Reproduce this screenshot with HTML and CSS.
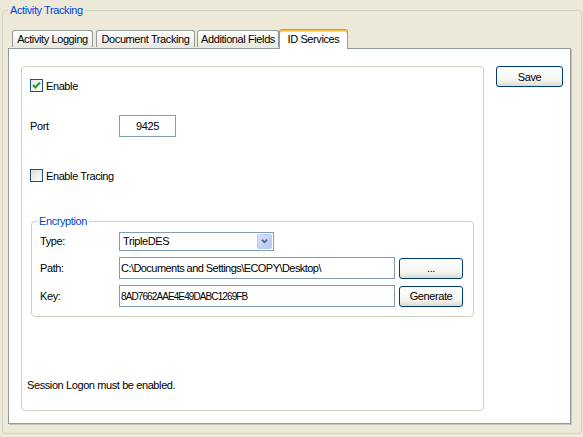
FILE: index.html
```html
<!DOCTYPE html>
<html lang="en">
<head>
  <meta charset="UTF-8">
  <title>Activity Tracking</title>
  <link rel="stylesheet" href="styles.css">
</head>
<body>

<fieldset class="group outer">
  <legend>Activity Tracking</legend>

  <div class="tabs">
    <div class="tab t1">Activity Logging</div>
    <div class="tab t2">Document Tracking</div>
    <div class="tab t3">Additional Fields</div>
    <div class="tab t4 active">ID Services</div>
  </div>

  <div class="panel">
    <div class="box">
      <label class="check first"><span class="cb on"><svg width="11" height="11" viewBox="0 0 11 11"><polyline points="2,5 4.3,7.5 9,2.5" fill="none" stroke="#21a121" stroke-width="2"/></svg></span>Enable</label>

      <div class="row port">
        <span class="lbl">Port</span>
        <input type="text" class="field num" value="9425">
      </div>

      <label class="check tracing"><span class="cb"></span>Enable Tracing</label>

      <fieldset class="group enc">
        <legend>Encryption</legend>
        <div class="erow r-type">
          <span class="elbl">Type:</span>
          <div class="combo">
            <span class="combo-text">TripleDES</span>
            <span class="combo-btn"><svg width="15" height="16" viewBox="0 0 15 16"><polyline points="4.5,6.5 7.5,9.5 10.5,6.5" fill="none" stroke="#4d6185" stroke-width="2"/></svg></span>
          </div>
        </div>
        <div class="erow">
          <span class="elbl">Path:</span>
          <input type="text" class="field long path" value="C:\Documents and Settings\ECOPY\Desktop\">
          <button class="btn small">...</button>
        </div>
        <div class="erow">
          <span class="elbl">Key:</span>
          <input type="text" class="field long key" value="8AD7662AAE4E49DABC1269FB">
          <button class="btn small">Generate</button>
        </div>
      </fieldset>

      <p class="note">Session Logon must be enabled.</p>
    </div>

    <div class="side">
      <button class="btn save">Save</button>
    </div>
  </div>
</fieldset>

</body>
</html>
```

FILE: styles.css
```css
body {
  margin: 0;
  width: 583px;
  height: 437px;
  overflow: hidden;
  background: #ece9d8;
  font-family: 'Liberation Sans', Arial, sans-serif;
  font-size: 11px;
  letter-spacing: -0.4px;
  color: #000;
}

.group {
  border: 1px solid #d0d0bf;
  border-radius: 4px;
  min-width: 0;
}

.group legend {
  padding: 0 2px;
  line-height: 14px;
  color: #0046d5;
}

.outer {
  margin: 3px 1px 0 2px;
  padding: 12px 0 9px 5px;
  width: 580px;
  box-sizing: border-box;
}

/* tabs */
.tabs {
  display: flex;
  align-items: flex-end;
  height: 19px;
  padding-left: 4px;
  position: relative;
  z-index: 1;
}

.tab {
  box-sizing: border-box;
  height: 17px;
  margin-bottom: 1px;
  border: 1px solid #919b9c;
  border-bottom: none;
  border-radius: 3px 3px 0 0;
  background: linear-gradient(#ffffff, #f3f3ef 60%, #e7e6df);
  text-align: center;
  line-height: 16px;
  white-space: nowrap;
}

.t1 { width: 81px; }
.t2 { width: 99px; margin-left: 3px; }
.t3 { width: 82px; margin-left: 2px; }

.tab.active {
  width: 69px;
  height: 20px;
  margin-bottom: -1px;
  border-top: 1px solid #e68b2c;
  background: #fff;
  box-shadow: inset 0 1px 0 #ffc83c, inset 0 2px 0 #ffd76a;
  line-height: 18px;
}

/* panel */
.panel {
  display: flex;
  align-items: flex-start;
  box-sizing: border-box;
  width: 563px;
  height: 376px;
  padding: 17px 0 0 12px;
  background: #fff;
  border: 1px solid #919b9c;
  box-shadow: 1px 1px 0 #c7c5b2;
}

.box {
  box-sizing: border-box;
  width: 463px;
  height: 345px;
  padding: 0 0 0 8px;
  border: 1px solid #d0d0bf;
  border-radius: 4px;
}

.side {
  margin-left: 12px;
}

/* checkboxes */
.check {
  display: flex;
  align-items: center;
  height: 13px;
  gap: 3px;
}

.check.first {
  margin-top: 12px;
}

.check.tracing {
  margin-top: 32px;
}

.cb {
  box-sizing: border-box;
  width: 13px;
  height: 13px;
  border: 1px solid #1c5180;
  background: linear-gradient(135deg, #dcdcd7, #fff);
  display: flex;
  align-items: center;
  justify-content: center;
}

.cb.on {
  background: linear-gradient(135deg, #e8e8e2, #fff);
}

/* port */
.row {
  display: flex;
  align-items: center;
}

.port {
  margin-top: 23px;
}

.lbl {
  width: 89px;
}

.field {
  box-sizing: border-box;
  height: 22px;
  border: 1px solid #7f9db9;
  padding: 0 3px;
  font: inherit;
  letter-spacing: inherit;
  color: #000;
  background: #fff;
  outline: none;
}

.field.num {
  width: 57px;
  text-align: center;
}

.field.long {
  width: 276px;
  padding: 0 1px;
}

.field.path {
  letter-spacing: -0.55px;
}

.field.key {
  font-size: 10px;
  letter-spacing: -0.9px;
}

/* encryption */
.enc {
  margin: 32px 0 0 1px;
  padding: 3px 0 9px 8px;
  width: 443px;
  box-sizing: border-box;
}

.enc legend {
  margin-left: -3px;
}

.erow {
  display: flex;
  align-items: center;
  height: 22px;
  margin-top: 6px;
}

.erow.r-type {
  height: 20px;
  margin-top: 0;
  margin-bottom: 1px;
}

.elbl {
  width: 79px;
}

.combo {
  box-sizing: border-box;
  width: 155px;
  height: 19px;
  border: 1px solid #7f9db9;
  display: flex;
  align-items: center;
  justify-content: space-between;
  padding: 0 1px 0 3px;
}

.combo-btn {
  display: flex;
  box-sizing: border-box;
  width: 15px;
  height: 15px;
  border: 1px solid #b9cbf3;
  border-radius: 2px;
  background: linear-gradient(135deg, #d6e2fc, #b3c7f5);
  align-items: center;
  justify-content: center;
  overflow: hidden;
}

/* buttons */
.btn {
  box-sizing: border-box;
  height: 21px;
  border: 1px solid #003c74;
  border-radius: 3px;
  background: linear-gradient(#ffffff, #f4f4f0 70%, #dcdad0);
  font: inherit;
  letter-spacing: inherit;
  color: #000;
  padding: 0;
}

.btn.small {
  width: 64px;
  margin-left: 4px;
}

.btn.save {
  width: 67px;
}

.note {
  margin: 62px 0 0 -3px;
  line-height: 13px;
}
```
